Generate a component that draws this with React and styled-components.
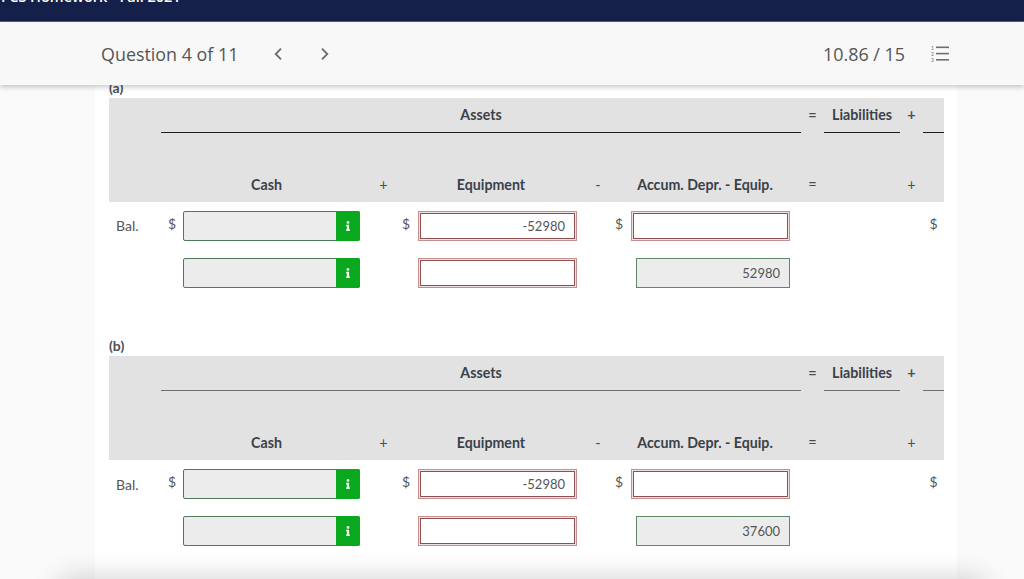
import React from 'react'
import styled, { createGlobalStyle } from 'styled-components'
import { FaInfo } from 'react-icons/fa'

const sections = [
  { label: '(a)', lineColor: '#1c1c1c', cash: '', equipment: '-52980', depr: '', deprBelow: '52980' },
  { label: '(b)', lineColor: '#6b6f70', cash: '', equipment: '-52980', depr: '', deprBelow: '37600' },
]

function Chevron({ flip }) {
  return (
    <svg width="10" height="14" viewBox="0 0 10 14" fill="none" stroke="#6b6b6b" strokeWidth="1.8">
      <path d={flip ? 'M2 1.7 L7.3 7 L2 12.3' : 'M8 1.7 L2.7 7 L8 12.3'} />
    </svg>
  )
}

function ListIcon() {
  return (
    <svg width="19" height="17" viewBox="0 0 19 17" fill="#6f6f6f">
      <text x="0" y="4.6" fontSize="5" fontFamily="Lato, sans-serif">1</text>
      <text x="0" y="10.8" fontSize="5" fontFamily="Lato, sans-serif">2</text>
      <text x="0" y="17" fontSize="5" fontFamily="Lato, sans-serif">3</text>
      <rect x="5" y="1.5" width="13" height="1.6" />
      <rect x="5" y="7.8" width="13" height="1.6" />
      <rect x="5" y="14" width="13" height="1.6" />
    </svg>
  )
}

function InfoField() {
  return (
    <CashField>
      <InfoButton>
        <FaInfo size={10} />
      </InfoButton>
    </CashField>
  )
}

function Section({ data }) {
  return (
    <Block>
      <PartLabel>{data.label}</PartLabel>
      <Head>
        <span />
        <HeadTitle $line={data.lineColor} $span={5}>Assets</HeadTitle>
        <Sign $strong>=</Sign>
        <HeadTitle $line={data.lineColor}>Liabilities</HeadTitle>
        <Sign $strong>+</Sign>
        <HeadTitle $line={data.lineColor} />

        <HeadGap />

        <span />
        <HeadTitle>Cash</HeadTitle>
        <Sign>+</Sign>
        <HeadTitle>Equipment</HeadTitle>
        <Sign>-</Sign>
        <HeadTitle>Accum. Depr. - Equip.</HeadTitle>
        <Sign>=</Sign>
        <span />
        <Sign>+</Sign>
        <span />
      </Head>

      <Body>
        <RowLabel>Bal.</RowLabel>
        <Cell $right={12}>
          <Dollar>$</Dollar>
          <InfoField />
        </Cell>
        <span />
        <Cell $right={10}>
          <Dollar $width={23} $pad={1}>$</Dollar>
          <WrongField>{data.equipment}</WrongField>
        </Cell>
        <span />
        <Cell $right={11}>
          <Dollar $pad={2}>$</Dollar>
          <WrongField>{data.depr}</WrongField>
        </Cell>
        <span />
        <span />
        <span />
        <Dollar>$</Dollar>

        <span />
        <Cell $right={12} $left={22}>
          <InfoField />
        </Cell>
        <span />
        <Cell $right={10} $left={23}>
          <WrongField />
        </Cell>
        <span />
        <Cell $right={11} $left={27}>
          <RightField>{data.deprBelow}</RightField>
        </Cell>
      </Body>
    </Block>
  )
}

export default function App() {
  return (
    <>
      <GlobalStyle />
      <TopBar>
        <Course>I CS Homework - Fall 2021</Course>
      </TopBar>
      <Toolbar>
        <QuestionTitle>Question 4 of 11</QuestionTitle>
        <Pager>
          <Chevron />
          <Chevron flip />
        </Pager>
        <Score>10.86 / 15</Score>
        <ListIcon />
      </Toolbar>
      <Page>
        <Sheet>
          {sections.map((s) => (
            <Section key={s.label} data={s} />
          ))}
        </Sheet>
      </Page>
      <BottomShade />
    </>
  )
}

const GlobalStyle = createGlobalStyle`
  html, body {
    margin: 0;
    height: 579px;
    overflow: hidden;
    background: #fafafa;
    font-family: Lato, sans-serif;
    color: #555;
  }
`

const columns = '52px 211px 23px 192px 22px 192px 23px 76px 23px 21px'

const TopBar = styled.div`
  height: 21px;
  background: #14204a;
  border-bottom: 1px solid #565d78;
  overflow: hidden;
`

const Course = styled.div`
  margin-top: -14px;
  padding-left: 1px;
  font: 600 14.5px/22px "Open Sans", sans-serif;
  color: #fff;
  white-space: nowrap;
`

const Toolbar = styled.header`
  position: relative;
  z-index: 2;
  display: flex;
  align-items: center;
  height: 63px;
  padding: 0 74px 0 101px;
  background: #f8f8f8;
  box-shadow: 0 2px 5px rgba(0, 0, 0, 0.22);
  font-family: "Open Sans", sans-serif;
  font-size: 17.9px;
  color: #555;
`

const QuestionTitle = styled.div`
  width: 172px;
`

const Pager = styled.nav`
  display: flex;
  gap: 37px;
`

const Score = styled.div`
  margin: 0 26px 0 auto;
`

const Page = styled.main`
  margin-top: -6px;
  padding: 0 67px 0 95px;
`

const Sheet = styled.div`
  background: #fff;
  padding: 0 13px 0 14px;
  height: 510px;
`

const Block = styled.section`
  height: 258.2px;
`

const PartLabel = styled.div`
  height: 19px;
  font-size: 14px;
  line-height: 18.5px;
  font-weight: 700;
  color: #4a4f55;
`

const Head = styled.div`
  display: grid;
  grid-template-columns: ${columns};
  grid-template-rows: 35px 35px 34px;
  background: #e2e2e2;
  align-items: center;
  text-align: center;
`

const HeadTitle = styled.div`
  grid-column: span ${(p) => p.$span || 1};
  align-self: stretch;
  display: flex;
  align-items: center;
  justify-content: center;
  box-sizing: border-box;
  padding-bottom: 1px;
  font-size: 14.2px;
  font-weight: 700;
  color: #3a4149;
  white-space: nowrap;
  border-bottom: ${(p) => (p.$line ? `1px solid ${p.$line}` : 'none')};
`

const HeadGap = styled.div`
  grid-column: 1 / -1;
`

const Sign = styled.div`
  padding-bottom: 2px;
  font-size: 14.5px;
  font-weight: ${(p) => (p.$strong ? 700 : 400)};
  color: #4a4f55;
`

const Body = styled.div`
  display: grid;
  grid-template-columns: ${columns};
  grid-auto-rows: 30px;
  row-gap: 17.3px;
  padding-top: 9px;
`

const RowLabel = styled.div`
  padding: 6.4px 0 0 7px;
  font-size: 14px;
  color: #555;
`

const Cell = styled.div`
  display: flex;
  padding-right: ${(p) => p.$right}px;
  padding-left: ${(p) => p.$left || 0}px;
`

const Dollar = styled.div`
  flex: 0 0 ${(p) => p.$width || 22}px;
  box-sizing: border-box;
  padding-right: ${(p) => p.$pad || 0}px;
  text-align: center;
  font-size: 14px;
  line-height: 26px;
  color: #555;
`

const Field = styled.div`
  flex: 1;
  box-sizing: border-box;
  font-size: 13px;
  text-align: right;
  color: #555;
`

const CashField = styled(Field)`
  display: flex;
  justify-content: flex-end;
  background: #ececec;
  border: 1px solid #4f7a58;
  border-radius: 2px;
`

const InfoButton = styled.div`
  display: flex;
  align-items: center;
  justify-content: center;
  width: 24px;
  margin: -1px -1px -1px 0;
  border-radius: 0 2px 2px 0;
  background: #0aa81e;
  color: #eef8ee;
`

const WrongField = styled(Field)`
  border: 1px solid #c4908f;
  box-shadow: inset 0 0 0 1px #f3e0e0, inset 0 0 0 2px #8f4f50;
  padding-right: 11px;
  line-height: 28px;
  background: #fff;
`

const RightField = styled(Field)`
  border: 1px solid #5f8a68;
  background: #ececec;
  padding-right: 9px;
  line-height: 28px;
`

const BottomShade = styled.div`
  position: fixed;
  left: 60px;
  right: 40px;
  bottom: -30px;
  height: 30px;
  box-shadow: 0 0 28px rgba(0, 0, 0, 0.2);
`
